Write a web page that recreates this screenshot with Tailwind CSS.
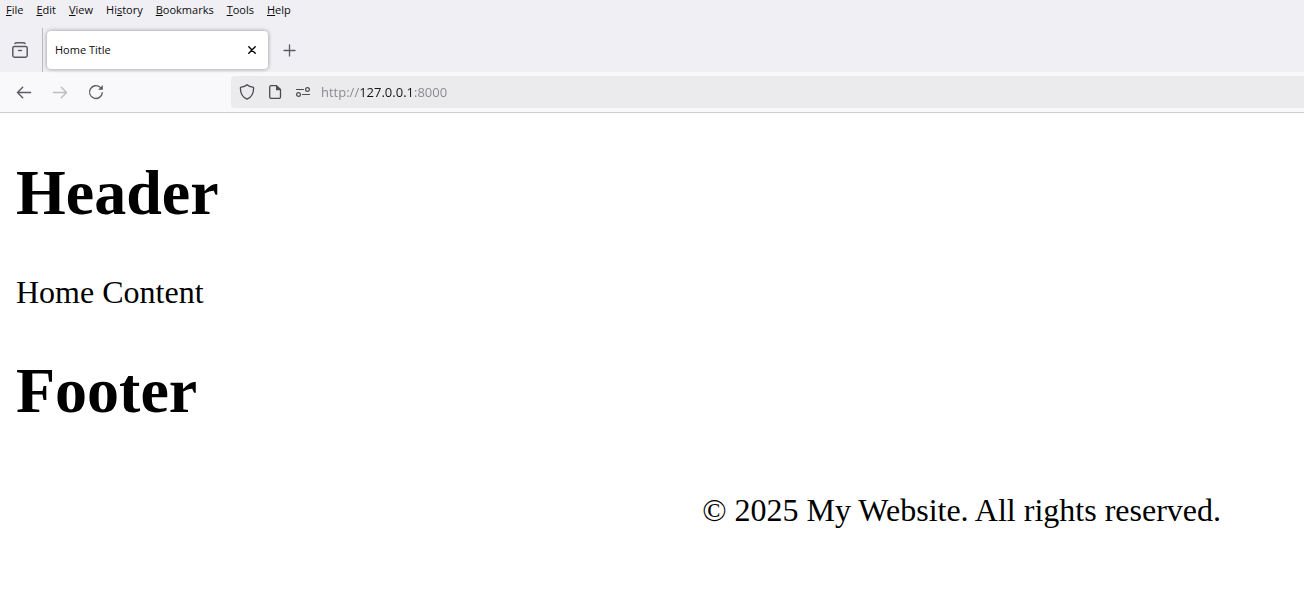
<!DOCTYPE html>
<html lang="en">
<head>
<meta charset="utf-8">
<meta name="viewport" content="width=device-width, initial-scale=1">
<title>Home Title</title>
<script src="https://cdn.jsdelivr.net/npm/@tailwindcss/browser@4"></script>
</head>
<body class="bg-white text-black">
<header class="border-b border-[#cccccc] bg-[#f9f9fb] font-['Open_Sans','Noto_Sans',sans-serif] text-[#0c0c0d]">
  <div class="bg-[#f0eff4]">
    <nav aria-label="Menu bar" class="flex h-7 items-start gap-[13px] px-1.5 pt-0.5 text-[11px] leading-4">
      <button type="button"><u>F</u>ile</button>
      <button type="button"><u>E</u>dit</button>
      <button type="button"><u>V</u>iew</button>
      <button type="button">Hi<u>s</u>tory</button>
      <button type="button"><u>B</u>ookmarks</button>
      <button type="button"><u>T</u>ools</button>
      <button type="button"><u>H</u>elp</button>
    </nav>
    <div class="flex h-11 items-center">
      <div class="flex h-full w-[43px] items-center border-r border-[#bab9be] pl-3">
        <button type="button" aria-label="View recent browsing" class="text-[#5b5b66]">
          <svg class="size-4" viewBox="0 0 16 16" fill="none" stroke="currentColor" stroke-width="1.500" stroke-linecap="round" stroke-linejoin="round"><path d="M3 1.500Q3.500.8 4.800.8h6.400Q12.500.8 13 1.500"/><rect x=".8" y="4.400" width="14.400" height="10.800" rx="1.700"/><path d="M6.500 8.500h3"/></svg>
        </button>
      </div>
      <div class="ml-1 flex h-[38px] w-[221px] items-center justify-between rounded bg-white px-2 shadow-[0_0_4px_rgba(0,0,0,0.4)]">
        <span class="text-[11px] leading-4">Home Title</span>
        <button type="button" aria-label="Close tab" class="flex size-4 items-center justify-center">
          <svg class="size-4" viewBox="0 0 16 16" fill="none" stroke="currentColor" stroke-width="1.500" stroke-linecap="round"><path d="M4.800 4.800l6.400 6.400m0-6.400l-6.400 6.400"/></svg>
        </button>
      </div>
      <button type="button" aria-label="New tab" class="ml-[13px] text-[#5b5b66]">
        <svg class="size-4" viewBox="0 0 16 16" fill="none" stroke="currentColor" stroke-width="1.300" stroke-linecap="round"><path d="M8.500 3v11M3 8.500h11"/></svg>
      </button>
    </div>
  </div>
  <div class="flex h-10 items-center pl-4">
    <div class="flex w-[215px] gap-5">
      <button type="button" aria-label="Back" class="text-[#5b5b66]">
        <svg class="size-4" viewBox="0 0 16 16" fill="none" stroke="currentColor" stroke-width="1.400" stroke-linecap="round" stroke-linejoin="round"><path d="M14.500 8.500H1.500M6.700 3.200L1.500 8.500l5.200 5.200"/></svg>
      </button>
      <button type="button" aria-label="Forward" disabled class="text-[#bdbdc2]">
        <svg class="size-4" viewBox="0 0 16 16" fill="none" stroke="currentColor" stroke-width="1.400" stroke-linecap="round" stroke-linejoin="round"><path d="M1.500 8.500h13M9.300 3.200l5.200 5.300-5.200 5.200"/></svg>
      </button>
      <button type="button" aria-label="Reload" class="text-[#5b5b66]">
        <svg class="size-4" viewBox="0 0 16 16" fill="none" stroke="currentColor" stroke-width="1.300" stroke-linecap="round"><path d="M14.300 8.600a6.400 6.400 0 1 1-2-5.200l1 1"/><path d="M14.900 1.100v4.700h-4.800z" fill="currentColor" stroke="none"/></svg>
      </button>
    </div>
    <div class="flex h-8 flex-1 items-center rounded-l bg-[#ebebed] pl-2 text-[#4c4b52]">
      <button type="button" aria-label="Tracking protection">
        <svg class="size-4" viewBox="0 0 16 16" fill="none" stroke="currentColor" stroke-width="1.300" stroke-linejoin="round"><path d="M8 .8C6.500 2.200 3.500 3 1.500 3.300 1.100 8.500 3 13 8 15.200c5-2.200 6.900-6.700 6.500-11.900C12.500 3 9.500 2.200 8 .8z"/></svg>
      </button>
      <button type="button" aria-label="Page information" class="ml-3">
        <svg class="size-4" viewBox="0 0 16 16" fill="none" stroke="currentColor" stroke-width="1.300" stroke-linejoin="round"><path d="M9.500 1.700H4Q2.700 1.700 2.700 3v10q0 1.300 1.300 1.300h8.200q1.300 0 1.300-1.300V5.500z"/><path d="M9 1.200l5 5H9z" fill="currentColor" stroke="none"/></svg>
      </button>
      <button type="button" aria-label="Site permissions" class="ml-3">
        <svg class="size-4" viewBox="0 0 16 16" fill="none" stroke="currentColor" stroke-width="1.200" stroke-linecap="round"><path d="M1.500 5.500h7M7.500 10.500h7"/><circle cx="12.500" cy="5.500" r="1.900"/><circle cx="3.500" cy="10.500" r="1.900"/></svg>
      </button>
      <input type="text" aria-label="Address" value="http://127.0.0.1:8000" spellcheck="false" class="ml-2.5 h-6 min-w-0 flex-1 bg-[linear-gradient(90deg,#87868c_39px,#15141a_39px,#15141a_93px,#87868c_93px)] bg-clip-text text-[13px] leading-5 text-transparent outline-none">
    </div>
  </div>
</header>
<main class="px-4 py-[43px] font-['Liberation_Serif',serif] text-[32px] leading-[37px]">
  <h1 class="text-[64px] leading-[74px] font-bold">Header</h1>
  <p class="mt-11 mb-[43px]">Home Content</p>
  <footer>
    <h1 class="text-[64px] leading-[74px] font-bold">Footer</h1>
    <p class="mt-16 pr-[67px] text-right">© 2025 My Website. All rights reserved.</p>
  </footer>
</main>
</body>
</html>
